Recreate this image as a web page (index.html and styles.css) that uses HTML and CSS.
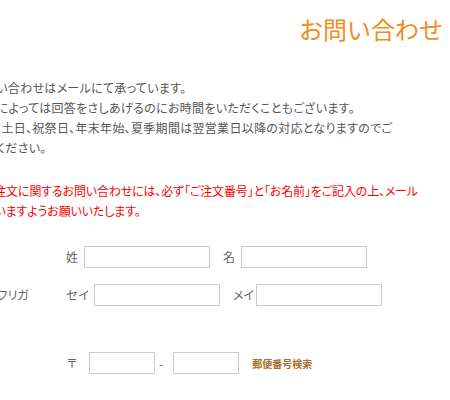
FILE: index.html
```html
<!DOCTYPE html>
<html lang="ja">
<head>
<meta charset="UTF-8">
<meta name="viewport" content="width=device-width, initial-scale=1.0">
<title>お問い合わせ</title>
<link rel="stylesheet" href="styles.css">
</head>
<body>
<div class="page">
  <h1 class="page-title">お問い合わせ</h1>

  <p class="intro">
    お問い合わせはメールにて承っています。<br>
    内容によっては回答をさしあげるのにお時間をいただくこともございます。<br>
    また、土日、祝祭日、年末年始、夏季期間は翌営業日以降の対応となりますのでご<br>
    了承ください。
  </p>

  <p class="notice">
    ※ご注文に関するお問い合わせには、必ず「ご注文番号」と「お名前」をご記入の上、メール<br>
    下さいますようお願いいたします。
  </p>

  <form class="contact-form">
    <div class="form-row">
      <div class="form-label">お名前</div>
      <div class="form-field">
        <span class="sub-label">姓</span><input type="text" class="input-name">
        <span class="sub-label sub-next">名</span><input type="text" class="input-name">
      </div>
    </div>
    <div class="form-row">
      <div class="form-label">お名前フリガ</div>
      <div class="form-field">
        <span class="sub-label sub-kana">セイ</span><input type="text" class="input-name">
        <span class="sub-label sub-kana sub-next sub-mei">メイ</span><input type="text" class="input-name">
      </div>
    </div>
    <div class="form-row row-address">
      <div class="form-label">ご住所</div>
      <div class="form-field">
        <span class="sub-label zip-mark">〒</span><input type="text" class="input-zip">
        <span class="zip-dash">-</span><input type="text" class="input-zip">
        <a href="#" class="zip-search">郵便番号検索</a>
      </div>
    </div>
  </form>
</div>
</body>
</html>
```

FILE: styles.css
```css
html, body {
  margin: 0;
  padding: 0;
  background: #fff;
  overflow: hidden;
}
body {
  font-family: "Noto Sans CJK JP", "Noto Sans", sans-serif;
  font-size: 12px;
  color: #555;
}
.page {
  margin-left: -28px;
  padding-right: 7px;
  padding-top: 14px;
}
.page-title {
  margin: 0;
  text-align: right;
  font-size: 24px;
  font-weight: normal;
  line-height: 30px;
  color: #f28c1b;
}
.intro,
.notice {
  margin: 0;
  line-height: 20px;
  white-space: nowrap;
  font-feature-settings: "palt";
}
.intro {
  margin-top: 34px;
  letter-spacing: 0.3px;
}
.notice {
  margin-top: 23px;
  color: #ff0000;
  letter-spacing: -0.15px;
}
.contact-form {
  margin-top: 25px;
}
.form-row {
  display: flex;
  align-items: flex-start;
  margin-bottom: 16px;
}
.row-address {
  margin-top: 46px;
}
.form-label {
  width: 104px;
  line-height: 22px;
  margin-left: -10px;
  color: #666;
  white-space: nowrap;
  font-feature-settings: "palt";
}
.form-field {
  display: flex;
  align-items: center;
  color: #666;
}
.sub-label {
  line-height: 22px;
  margin-right: 6px;
}
.sub-kana {
  margin-right: 4px;
}
.sub-next {
  margin-left: 13px;
}
.sub-mei {
  font-feature-settings: "palt";
  margin-right: 2px;
}
.form-field input {
  box-sizing: border-box;
  height: 22px;
  border: 1px solid #ccc;
  margin: 0;
  padding: 2px 4px;
  font: inherit;
}
.input-name {
  width: 126px;
}
.input-zip {
  width: 66px;
}
.zip-mark {
  margin-right: 11px;
}
.zip-dash {
  margin: 0 10px 0 4px;
}
.zip-search {
  margin-left: 13px;
  font-size: 10px;
  font-weight: bold;
  color: #a86f2c;
  text-decoration: none;
}
```
